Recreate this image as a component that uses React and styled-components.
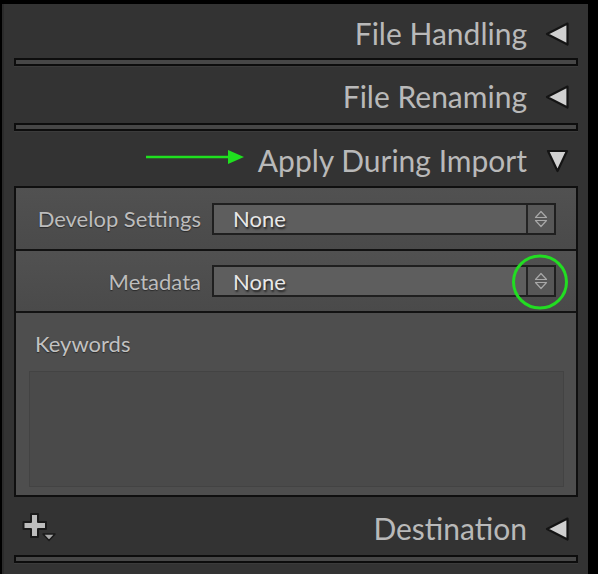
import React from "react";
import styled, { createGlobalStyle } from "styled-components";

const GlobalStyle = createGlobalStyle`
  html, body { margin: 0; padding: 0; background: #000; }
  body { font-family: Lato, "Open Sans", sans-serif; }
`;

const Panel = styled.div`
  margin: 4px 10px 0 2px;
  height: 570px;
  background: #333333;
  border-left: 2px solid #2b2b2b;
  display: flex;
  flex-direction: column;
  box-sizing: border-box;
`;

const Header = styled.div`
  height: ${(p) => p.$h}px;
  display: flex;
  align-items: center;
  justify-content: flex-end;
  gap: 17px;
  padding: 5px 18px 0 0;
  box-sizing: border-box;
`;

const Title = styled.span`
  font-size: 30px;
  color: #b9b9b9;
  line-height: 1;
  padding-bottom: 2px;
`;

const CollapseBar = styled.div`
  height: 8px;
  margin: 0 10px 0 10px;
  box-sizing: border-box;
  border: 2px solid #0d0d0d;
  background: #474747;
  box-shadow: 0 1px 0 #3b3b3b;
`;

const ContentBox = styled.div`
  margin: 0 10px;
  height: 311px;
  box-sizing: border-box;
  border: 2px solid #0f0f0f;
  background: #4c4c4c;
  display: flex;
  flex-direction: column;
`;

const SelectRow = styled.div`
  position: relative;
  height: ${(p) => p.$h}px;
  display: flex;
  align-items: center;
  border-bottom: 2px solid #121212;
  background: linear-gradient(#515151, #4a4a4a);
  box-sizing: border-box;
  padding-right: 20px;
`;

const Label = styled.span`
  width: 185px;
  text-align: right;
  font-size: 22px;
  color: #bdbdbd;
  padding-right: 11px;
  text-shadow: 0 1px 1px #2a2a2a;
`;

const Select = styled.div`
  flex: 1;
  height: 32px;
  display: flex;
  box-sizing: border-box;
  border: 2px solid #1f1f1f;
  background: #5e5e5e;
`;

const SelectValue = styled.span`
  flex: 1;
  display: flex;
  align-items: center;
  padding-left: 19px;
  font-size: 22px;
  color: #e8e8e8;
  text-shadow: 1px 2px 2px #222;
`;

const Stepper = styled.div`
  width: 26px;
  border-left: 2px solid #242424;
  background: #575757;
  display: flex;
  align-items: center;
  justify-content: center;
`;

const Ring = styled.svg`
  position: absolute;
  left: 495px;
  top: 3px;
  pointer-events: none;
`;

const KeywordsArea = styled.div`
  flex: 1;
  display: flex;
  flex-direction: column;
  padding: 17px 12px 8px 13px;
  background: #4e4e4e;
`;

const KeywordsLabel = styled.span`
  font-size: 22px;
  color: #c2c2c2;
  padding-left: 6px;
  height: 41px;
  text-shadow: 0 1px 1px #2a2a2a;
`;

const TextBox = styled.div`
  height: 116px;
  box-sizing: border-box;
  border: 1px solid #434343;
  background: #4a4a4a;
`;

const Footer = styled.div`
  height: 58px;
  display: flex;
  align-items: center;
  padding: 6px 18px 0 18px;
  box-sizing: border-box;
`;

const Spacer = styled.div`
  flex: 1;
`;

const FooterTitle = styled(Title)`
  margin-right: 17px;
`;

const IconSvg = styled.svg`
  flex-shrink: 0;
  display: block;
`;

const ArrowSvg = styled(IconSvg)`
  margin: 0 -3px 8px 0;
`;

const TriLeft = () => (
  <IconSvg width="26" height="26" viewBox="0 0 26 26">
    <path d="M23.5 2.5 L3 13 L23.5 23.5 Z" fill="#d0d0d0" stroke="#141414" strokeWidth="2.2" strokeLinejoin="round" />
  </IconSvg>
);

const TriDown = () => (
  <IconSvg width="26" height="26" viewBox="0 0 26 26">
    <path d="M4 3 L23 3 L13.5 23 Z" fill="#d0d0d0" stroke="#141414" strokeWidth="2.2" strokeLinejoin="round" />
  </IconSvg>
);

const StepIcon = () => (
  <IconSvg width="14" height="20" viewBox="0 0 14 20">
    <path d="M1.5 8.5 L7 2.5 L12.5 8.5 Z" fill="#585858" stroke="#a8a8a8" strokeWidth="1.2" strokeLinejoin="round" />
    <path d="M1.5 11.5 L12.5 11.5 L7 17.5 Z" fill="#585858" stroke="#a8a8a8" strokeWidth="1.2" strokeLinejoin="round" />
  </IconSvg>
);

const Arrow = () => (
  <ArrowSvg width="98" height="16" viewBox="0 0 98 16">
    <line x1="0" y1="8" x2="84" y2="8" stroke="#1fe01f" strokeWidth="2.5" />
    <path d="M82 1 L98 8 L82 15 Z" fill="#1fe01f" />
  </ArrowSvg>
);

const PlusIcon = () => (
  <IconSvg width="38" height="34" viewBox="0 0 38 34">
    <path
      d="M9 2 H16 V10 H24 V17 H16 V25 H9 V17 H1.5 V10 H9 Z"
      fill="#bdbdbd"
      stroke="#1a1a1a"
      strokeWidth="2"
      strokeLinejoin="round"
    />
    <path d="M21 22 L33 22 L27 28.5 Z" fill="#a8a8a8" stroke="#1a1a1a" strokeWidth="1.5" strokeLinejoin="round" />
  </IconSvg>
);

const SelectField = ({ value }) => (
  <Select>
    <SelectValue>{value}</SelectValue>
    <Stepper>
      <StepIcon />
    </Stepper>
  </Select>
);

export default function App() {
  return (
    <>
      <GlobalStyle />
      <Panel>
        <Header $h={54}>
          <Title>File Handling</Title>
          <TriLeft />
        </Header>
        <CollapseBar />
        <Header $h={57}>
          <Title>File Renaming</Title>
          <TriLeft />
        </Header>
        <CollapseBar />
        <Header $h={55}>
          <Arrow />
          <Title>Apply During Import</Title>
          <TriDown />
        </Header>
        <ContentBox>
          <SelectRow $h={63}>
            <Label>Develop Settings</Label>
            <SelectField value="None" />
          </SelectRow>
          <SelectRow $h={62}>
            <Label>Metadata</Label>
            <SelectField value="None" />
            <Ring width="58" height="56" viewBox="0 0 58 56">
              <ellipse cx="29" cy="28" rx="26.5" ry="26" fill="none" stroke="#22dd22" strokeWidth="3" />
            </Ring>
          </SelectRow>
          <KeywordsArea>
            <KeywordsLabel>Keywords</KeywordsLabel>
            <TextBox />
          </KeywordsArea>
        </ContentBox>
        <Footer>
          <PlusIcon />
          <Spacer />
          <FooterTitle>Destination</FooterTitle>
          <TriLeft />
        </Footer>
        <CollapseBar />
      </Panel>
    </>
  );
}
